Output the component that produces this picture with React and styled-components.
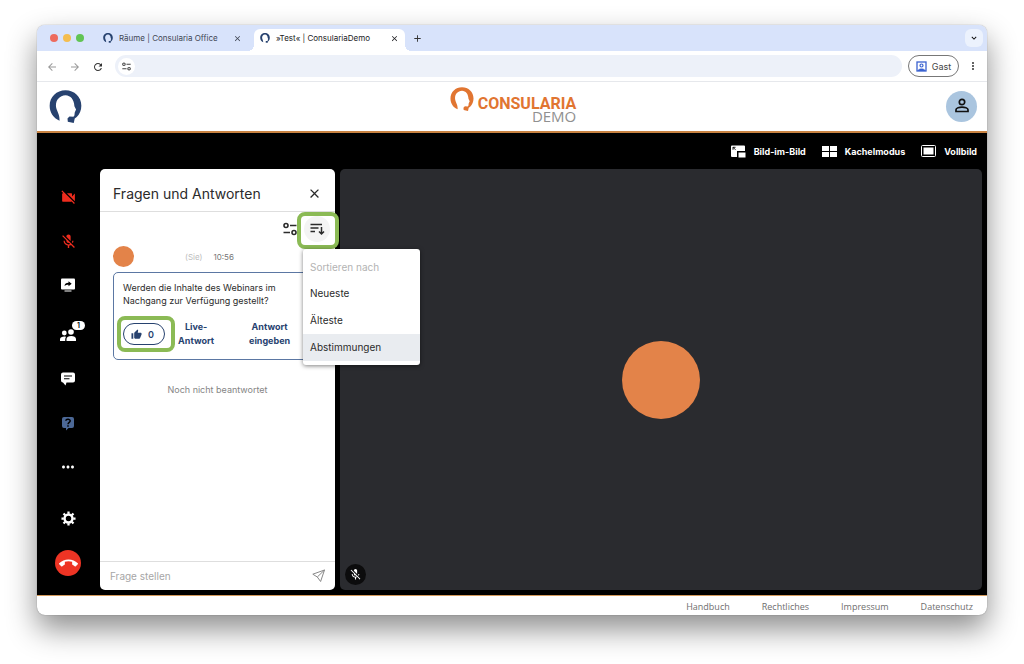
import React from 'react';
import styled, { createGlobalStyle, css } from 'styled-components';
import {
  MdVideocamOff,
  MdMicOff,
  MdCallEnd,
  MdThumbUp,
  MdMoreHoriz,
  MdMoreVert,
  MdClose,
  MdAdd,
  MdArrowBack,
  MdArrowForward,
  MdRefresh,
  MdKeyboardArrowDown,
} from 'react-icons/md';

const navy = '#27426f';
const orange = '#e38349';
const green = '#8bba55';

const GlobalStyle = createGlobalStyle`
* { box-sizing: border-box; }
body { margin: 0; background: #fff; font-family: Inter, "Liberation Sans", sans-serif; }
button, input { font: inherit; color: inherit; }
button { padding: 0; border: 0; background: none; }
svg { display: block; flex: none; }
a { color: inherit; text-decoration: none; }
`;

const Desktop = styled.div`
display: flex;
min-height: 100vh;
padding: 25px 37px 49px;
`;

const BrowserWindow = styled.div`
flex: 1;
min-width: 0;
display: flex;
flex-direction: column;
border-radius: 8px;
overflow: hidden;
background: #fff;
box-shadow: 0 0 1px rgba(0,0,0,.5), 0 14px 30px rgba(0,0,0,.45);
`;

const TabStrip = styled.div`
display: flex;
align-items: flex-end;
height: 26px;
padding: 0 4px 0 13px;
background: #d8e3fb;
`;

const Lights = styled.div`
display: flex;
gap: 5px;
align-self: center;
margin-right: 13px;
`;

const Light = styled.span`
width: 8px;
height: 8px;
border-radius: 50%;
background: ${(props) => props.$color};
`;

const Tab = styled.div`
position: relative;
display: flex;
align-items: center;
gap: 6px;
width: 151px;
height: 22px;
padding: 0 6px 4px;
border-radius: 6px 6px 0 0;
font-size: 8px;
color: #3f4653;
${(props) => props.$active && css`
  margin-left: 6px;
  background: #fff;
  color: #202124;
  &::before, &::after {
    content: '';
    position: absolute;
    bottom: 0;
    width: 6px;
    height: 6px;
  }
  &::before { left: -6px; background: radial-gradient(circle at 0 0, transparent 6px, #fff 6px); }
  &::after { right: -6px; background: radial-gradient(circle at 100% 0, transparent 6px, #fff 6px); }
`}
`;

const TabTitle = styled.button`
flex: 1;
text-align: left;
white-space: nowrap;
`;

const NewTab = styled.button`
margin: 0 auto 7px 7px;
color: #333;
`;

const TabMenu = styled.button`
display: grid;
place-items: center;
width: 18px;
height: 18px;
margin-bottom: 4px;
border-radius: 6px;
background: #ecf2fd;
`;

const Toolbar = styled.div`
display: flex;
align-items: center;
height: 31px;
padding: 0 8px 0 9px;
border-bottom: 1px solid #e6e8ec;
font-size: 9px;
color: #444;
`;

const NavButton = styled.button`
display: grid;
place-items: center;
width: 11px;
height: 11px;
margin-right: 12px;
color: ${(props) => (props.$off ? '#9a9a9a' : '#333')};
`;

const AddressBar = styled.div`
flex: 1;
display: flex;
align-items: center;
height: 22px;
padding: 0 3px;
border-radius: 11px;
background: #edf1f9;
`;

const SiteInfo = styled.button`
display: grid;
place-items: center;
width: 17px;
height: 17px;
border-radius: 50%;
background: #fff;
`;

const AddressInput = styled.input`
flex: 1;
min-width: 0;
border: 0;
outline: 0;
background: none;
`;

const Guest = styled.button`
display: flex;
align-items: center;
justify-content: center;
gap: 5px;
width: 51px;
height: 22px;
margin: 0 8px 0 6px;
border: 1px solid #777;
border-radius: 11px;
`;

const Header = styled.header`
display: grid;
grid-template-columns: 1fr auto 1fr;
align-items: center;
height: 51px;
padding: 0 10px 0 12px;
border-bottom: 2px solid #c98342;
`;

const Brand = styled.a`
display: flex;
align-items: flex-start;
gap: 4px;
padding-bottom: 4px;
`;

const BrandText = styled.span`
display: flex;
flex-direction: column;
align-items: flex-end;
padding-top: 10px;
`;

const BrandName = styled.span`
font: 700 16px/14px Roboto, "Liberation Sans", sans-serif;
color: #e17531;
`;

const BrandSub = styled.span`
font: 400 15px/11px "Open Sans", sans-serif;
color: #909090;
`;

const Account = styled.button`
display: grid;
place-items: center;
justify-self: end;
width: 31px;
height: 31px;
padding-bottom: 2px;
border-radius: 50%;
background: #aac5df;
color: #111;
`;

const Stage = styled.main`
flex: 1;
display: flex;
flex-direction: column;
padding: 0 5px 5px 0;
background: #000;
color: #fff;
`;

const ViewBar = styled.nav`
display: flex;
align-items: center;
justify-content: flex-end;
gap: 16px;
height: 36px;
padding-right: 5px;
`;

const ViewButton = styled.button`
display: flex;
align-items: center;
gap: 8px;
font-size: 9px;
font-weight: 700;
`;

const Room = styled.div`
flex: 1;
display: flex;
gap: 5px;
`;

const Rail = styled.aside`
display: flex;
flex-direction: column;
align-items: center;
width: 58px;
padding: 6px 0 5px 4px;
`;

const RailButton = styled.button`
display: grid;
place-items: center;
width: 44px;
height: ${(props) => (props.$tall ? '50px' : '44px')};
margin-top: ${(props) => (props.$last ? 'auto' : '0')};
color: ${(props) => props.$color || '#fff'};
`;

const People = styled.span`
position: relative;
padding-top: 6px;
`;

const Count = styled.span`
position: absolute;
top: -2px;
left: 12px;
width: 13px;
border-radius: 5px;
background: #fff;
color: #000;
font-size: 7px;
font-weight: 600;
line-height: 9px;
text-align: center;
`;

const HangUp = styled.button`
display: grid;
place-items: center;
width: 26px;
height: 26px;
margin-top: 10px;
margin-bottom: 9px;
border-radius: 50%;
background: #ee3424;
`;

const Panel = styled.section`
display: flex;
flex-direction: column;
width: 235px;
border-radius: 5px;
background: #fff;
color: #2b2b2b;
`;

const PanelHead = styled.div`
display: flex;
align-items: center;
justify-content: space-between;
height: 43px;
padding: 7px 13px 0;
border-bottom: 1px solid #dedede;
`;

const PanelTitle = styled.h1`
margin: 0;
font-size: 14px;
font-weight: 400;
line-height: 20px;
`;

const Filters = styled.div`
display: flex;
align-items: center;
justify-content: flex-end;
gap: 7px;
height: 34px;
padding-right: 5px;
`;

const Sort = styled.div`
position: relative;
`;

const SortButton = styled.button`
display: grid;
place-items: center;
width: 26px;
height: 26px;
border-radius: 50%;
background: #f4f4f4;
`;

const Marker = styled.span`
position: absolute;
inset: ${(props) => props.$inset};
border: 4px solid ${green};
border-radius: 8px;
pointer-events: none;
`;

const Menu = styled.ul`
position: absolute;
z-index: 2;
top: 33px;
left: -1px;
width: 117px;
margin: 0;
padding: 5px 0 4px;
border-radius: 3px;
background: #fff;
box-shadow: 0 1px 4px rgba(0,0,0,.5);
list-style: none;
font-size: 10px;
`;

const MenuHead = styled.li`
padding-left: 7px;
line-height: 26px;
color: #b3b3b3;
`;

const MenuItem = styled.button`
display: block;
width: 100%;
padding-left: 7px;
line-height: 27px;
text-align: left;
background: ${(props) => (props.$active ? '#e9ecf0' : 'transparent')};
`;

const Questions = styled.div`
flex: 1;
padding: 0 13px;
`;

const Meta = styled.div`
display: flex;
align-items: center;
height: 21px;
margin-bottom: 5px;
font-size: 8px;
color: #777;
`;

const Avatar = styled.span`
width: 21px;
height: 21px;
border-radius: 50%;
background: ${orange};
`;

const You = styled.span`
margin: 0 11px 0 51px;
color: #bdbdbd;
`;

const Card = styled.article`
padding: 8px 9px 11px;
border: 1px solid #5b77a3;
border-radius: 5px;
font-size: 9px;
`;

const Question = styled.p`
margin: 0 0 13px;
line-height: 13px;
`;

const Actions = styled.div`
display: flex;
align-items: center;
color: ${navy};
font-weight: 700;
`;

const Vote = styled.div`
position: relative;
`;

const VoteButton = styled.button`
display: flex;
align-items: center;
justify-content: center;
gap: 6px;
width: 42px;
height: 22px;
padding-right: 3px;
border: 1px solid ${navy};
border-radius: 11px;
font-weight: 600;
`;

const Action = styled.button`
width: ${(props) => props.$width};
line-height: 14px;
text-align: center;
`;

const Pending = styled.p`
margin: 24px 0 0;
font-size: 9px;
line-height: 12px;
text-align: center;
color: #858585;
`;

const Composer = styled.form`
display: flex;
align-items: center;
height: 29px;
padding: 0 9px 0 10px;
border-top: 1px solid #dedede;
color: #888;
`;

const ComposerInput = styled.input`
flex: 1;
min-width: 0;
padding: 0;
border: 0;
outline: 0;
background: none;
font-size: 10px;
&::placeholder { color: #a6a6a6; opacity: 1; }
`;

const Video = styled.section`
flex: 1;
display: grid;
place-items: center;
position: relative;
border-radius: 5px;
background: #2a2b2f;
`;

const Speaker = styled.div`
width: 78px;
height: 78px;
border-radius: 50%;
background: ${orange};
`;

const Muted = styled.span`
position: absolute;
left: 5px;
bottom: 5px;
display: grid;
place-items: center;
width: 21px;
height: 21px;
border-radius: 50%;
background: #0c0c0d;
`;

const Footer = styled.footer`
display: flex;
align-items: center;
justify-content: flex-end;
gap: 32px;
height: 20px;
padding: 1px 14px 0 0;
border-top: 1px solid #d49a5c;
font: 400 9px "Open Sans", sans-serif;
color: #6e6e6e;
`;

function HeadLogo({ size, color }) {
  return (
    <svg width={size} height={size} viewBox="0 0 100 100" fill={color} aria-hidden="true">
      <path d="M32 93C13 86 2 68 2 48C2 21 23 1 50 1C77 1 98 21 98 48C98 61 93 74 84 82L78 86L75 100L57 96L56 86L62 80L74 81L77 77L78 68L82 59L77 49C76 29 66 17 50 16C32 17 21 30 21 47C21 63 33 70 32 93Z" />
    </svg>
  );
}

function TuneIcon({ size }) {
  return (
    <svg width={size} height={size} viewBox="0 0 14 14" fill="none" stroke="currentColor" strokeWidth="1.6" aria-hidden="true">
      <circle cx="3" cy="3.500" r="2" />
      <circle cx="11" cy="10.500" r="2" />
      <path d="M7 3.500h6.500M.5 10.500H7" />
    </svg>
  );
}

function SortIcon() {
  return (
    <svg width="15" height="14" viewBox="0 0 15 14" fill="none" stroke="currentColor" strokeWidth="1.5" aria-hidden="true">
      <path d="M.5 2.500H12M.5 6h8M.5 9.500H5M11.500 5v7M9 9.500l2.500 2.500L14 9.500" />
    </svg>
  );
}

function PersonIcon() {
  return (
    <svg width="14" height="15" viewBox="0 0 14 15" fill="none" stroke="currentColor" strokeWidth="1.700" aria-hidden="true">
      <circle cx="7" cy="4" r="2.700" />
      <path d="M1 13.500V11.700C1 10 4.500 9.100 7 9.100C9.500 9.100 13 10 13 11.700V13.500Z" />
    </svg>
  );
}

function PipIcon() {
  return (
    <svg width="15" height="13" viewBox="0 0 15 13" aria-hidden="true">
      <path fill="#fff" d="M1 .5H13a1 1 0 0 1 1 1V6H6v6H1a1 1 0 0 1-1-1V1.500a1 1 0 0 1 1-1ZM7.500 7.500H14.500V12.500H7.500Z" />
      <path fill="none" stroke="#000" strokeWidth=".9" d="M2 4.800V2.300H4.500M2 2.300L4.500 4.800M6 6.500h8" />
    </svg>
  );
}

function TilesIcon() {
  return (
    <svg width="15" height="11" viewBox="0 0 15 11" fill="#fff" aria-hidden="true">
      <path d="M0 0h7v5H0zM8 0h7v5H8zM0 6h7v5H0zM8 6h7v5H8z" />
    </svg>
  );
}

function FullscreenIcon() {
  return (
    <svg width="15" height="12" viewBox="0 0 15 12" aria-hidden="true">
      <rect x=".5" y=".5" width="14" height="11" rx="1" fill="none" stroke="#fff" />
      <rect x="2.500" y="2.500" width="10" height="7" fill="#fff" />
    </svg>
  );
}

function ShareIcon() {
  return (
    <svg width="14" height="14" viewBox="0 0 14 14" aria-hidden="true">
      <rect width="14" height="11" y=".5" rx="1" fill="#fff" />
      <path fill="#fff" d="M3.500 12.500h7v1h-7z" />
      <path fill="#000" d="M3.500 8C3.700 5.800 5.200 4.800 7.500 4.800V3.200L10.700 5.800L7.500 8.300V6.700C5.700 6.700 4.500 7 3.500 8Z" />
    </svg>
  );
}

function PeopleIcon() {
  return (
    <svg width="16" height="12" viewBox="0 0 16 12" fill="#fff" aria-hidden="true">
      <circle cx="4.300" cy="4" r="2.400" />
      <circle cx="11" cy="3" r="2.800" />
      <path d="M0 12V10.500C0 8.500 2 7.600 4.500 7.600C5.300 7.600 5.700 7.700 6 7.900C5.300 8.700 5.200 9.500 5.200 12ZM6.500 12V10C6.500 7.900 8.600 7 11.200 7C13.900 7 16 8 16 10V12Z" />
    </svg>
  );
}

function ChatIcon() {
  return (
    <svg width="14" height="14" viewBox="0 0 14 14" aria-hidden="true">
      <path fill="#fff" d="M2 .5H12a2 2 0 0 1 2 2V8.500a2 2 0 0 1-2 2H5.500L4.500 13.500L2 10.500a2 2 0 0 1-2-2V2.500a2 2 0 0 1 2-2Z" />
      <path stroke="#000" strokeWidth="1.100" d="M3 4h8M3 6.700h5.500" />
    </svg>
  );
}

function QuestionIcon() {
  return (
    <svg width="14" height="15" viewBox="0 0 14 15" aria-hidden="true">
      <path fill="#4c6896" d="M3 1H11a2 2 0 0 1 2 2V10a2 2 0 0 1-2 2H7.500L5 14.500V12H3a2 2 0 0 1-2-2V3a2 2 0 0 1 2-2Z" />
      <path fill="none" stroke="#000" strokeWidth="1.500" d="M4.800 4.800C5 2.700 9.300 2.800 9.200 5C9.100 6.400 7 6.300 7 8.200M7 9.200v1.500" />
    </svg>
  );
}

function GearIcon() {
  return (
    <svg width="15" height="15" viewBox="0 0 16 16" fill="none" stroke="#fff" aria-hidden="true">
      <circle cx="8" cy="8" r="4.200" strokeWidth="2.600" />
      <path strokeWidth="2.400" d="M8 .5V3M8 13v2.500M.5 8H3M13 8h2.500M2.700 2.700L4.500 4.500M11.500 11.500l1.800 1.800M2.700 13.300l1.800-1.800M11.500 4.500l1.800-1.800" />
    </svg>
  );
}

function GuestIcon() {
  return (
    <svg width="11" height="11" viewBox="0 0 11 11" fill="none" stroke="#3a62d0" aria-hidden="true">
      <rect x="1" y="1" width="9" height="9" strokeWidth="1.300" />
      <circle cx="5.500" cy="4.500" r="1.500" strokeWidth="1.200" />
      <path fill="#3a62d0" d="M2 9.500C3 7.500 8 7.500 9 9.500Z" />
    </svg>
  );
}

function SendIcon() {
  return (
    <svg width="14" height="14" viewBox="0 0 14 14" fill="none" stroke="currentColor" strokeLinejoin="round" aria-hidden="true">
      <path d="M12.500 1L.8 5.200L5.300 8ZM12.500 1L8.600 12.500L5.300 8" />
    </svg>
  );
}

const tabs = [
  { title: 'Räume | Consularia Office', active: false },
  { title: '»Test« | ConsulariaDemo', active: true },
];

const views = [
  { label: 'Bild-im-Bild', icon: <PipIcon /> },
  { label: 'Kachelmodus', icon: <TilesIcon /> },
  { label: 'Vollbild', icon: <FullscreenIcon /> },
];

const sortOptions = ['Neueste', 'Älteste', 'Abstimmungen'];

const links = ['Handbuch', 'Rechtliches', 'Impressum', 'Datenschutz'];

function BrowserChrome() {
  return (
    <>
      <TabStrip>
        <Lights>
          <Light $color="#ed6b5e" />
          <Light $color="#f4bd4f" />
          <Light $color="#61c454" />
        </Lights>
        {tabs.map((tab) => (
          <Tab key={tab.title} $active={tab.active}>
            <HeadLogo size={10} color={navy} />
            <TabTitle>{tab.title}</TabTitle>
            <button aria-label="Tab schließen"><MdClose size={9} /></button>
          </Tab>
        ))}
        <NewTab aria-label="Neuer Tab"><MdAdd size={11} /></NewTab>
        <TabMenu aria-label="Tabs suchen"><MdKeyboardArrowDown size={10} /></TabMenu>
      </TabStrip>
      <Toolbar>
        <NavButton $off aria-label="Zurück"><MdArrowBack size={12} /></NavButton>
        <NavButton $off aria-label="Vorwärts"><MdArrowForward size={12} /></NavButton>
        <NavButton aria-label="Neu laden"><MdRefresh size={12} /></NavButton>
        <AddressBar>
          <SiteInfo aria-label="Websiteinformationen"><TuneIcon size={9} /></SiteInfo>
          <AddressInput type="text" aria-label="Adresse" />
        </AddressBar>
        <Guest><GuestIcon />Gast</Guest>
        <button aria-label="Menü"><MdMoreVert size={12} /></button>
      </Toolbar>
    </>
  );
}

function QuestionPanel() {
  return (
    <Panel>
      <PanelHead>
        <PanelTitle>Fragen und Antworten</PanelTitle>
        <button aria-label="Schließen"><MdClose size={15} /></button>
      </PanelHead>
      <Filters>
        <button aria-label="Filtern"><TuneIcon size={14} /></button>
        <Sort>
          <SortButton aria-label="Sortieren"><SortIcon /></SortButton>
          <Marker $inset="-4px -9px -7px -7px" />
          <Menu>
            <MenuHead>Sortieren nach</MenuHead>
            {sortOptions.map((option) => (
              <li key={option}>
                <MenuItem $active={option === 'Abstimmungen'}>{option}</MenuItem>
              </li>
            ))}
          </Menu>
        </Sort>
      </Filters>
      <Questions>
        <Meta>
          <Avatar />
          <You>(Sie)</You>
          <time>10:56</time>
        </Meta>
        <Card>
          <Question>Werden die Inhalte des Webinars im Nachgang zur Verfügung gestellt?</Question>
          <Actions>
            <Vote>
              <VoteButton aria-label="Abstimmen"><MdThumbUp size={11} />0</VoteButton>
              <Marker $inset="-7px -10px -7px -6px" />
            </Vote>
            <Action $width="63px">Live-<br />Antwort</Action>
            <Action $width="86px">Antwort<br />eingeben</Action>
          </Actions>
        </Card>
        <Pending>Noch nicht beantwortet</Pending>
      </Questions>
      <Composer>
        <ComposerInput type="text" placeholder="Frage stellen" aria-label="Frage stellen" />
        <button type="button" aria-label="Senden"><SendIcon /></button>
      </Composer>
    </Panel>
  );
}

export default function App() {
  return (
    <Desktop>
      <GlobalStyle />
      <BrowserWindow>
        <BrowserChrome />
        <Header>
          <a href="#start" aria-label="Startseite"><HeadLogo size={33} color={navy} /></a>
          <Brand href="#start">
            <HeadLogo size={24} color="#e17531" />
            <BrandText>
              <BrandName>CONSULARIA</BrandName>
              <BrandSub>DEMO</BrandSub>
            </BrandText>
          </Brand>
          <Account aria-label="Konto"><PersonIcon /></Account>
        </Header>
        <Stage>
          <ViewBar>
            {views.map((view) => (
              <ViewButton key={view.label}>{view.icon}{view.label}</ViewButton>
            ))}
          </ViewBar>
          <Room>
            <Rail>
              <RailButton $color="#ee2c1e" aria-label="Kamera"><MdVideocamOff size={17} /></RailButton>
              <RailButton $color="#ee2c1e" aria-label="Mikrofon"><MdMicOff size={17} /></RailButton>
              <RailButton aria-label="Bildschirm teilen"><ShareIcon /></RailButton>
              <RailButton $tall aria-label="Teilnehmer">
                <People><PeopleIcon /><Count>1</Count></People>
              </RailButton>
              <RailButton aria-label="Chat"><ChatIcon /></RailButton>
              <RailButton aria-label="Fragen"><QuestionIcon /></RailButton>
              <RailButton aria-label="Mehr"><MdMoreHoriz size={18} /></RailButton>
              <RailButton $last aria-label="Einstellungen"><GearIcon /></RailButton>
              <HangUp aria-label="Auflegen"><MdCallEnd size={19} /></HangUp>
            </Rail>
            <QuestionPanel />
            <Video>
              <Speaker />
              <Muted><MdMicOff size={13} /></Muted>
            </Video>
          </Room>
        </Stage>
        <Footer>
          {links.map((link) => (
            <a key={link} href={`#${link.toLowerCase()}`}>{link}</a>
          ))}
        </Footer>
      </BrowserWindow>
    </Desktop>
  );
}
